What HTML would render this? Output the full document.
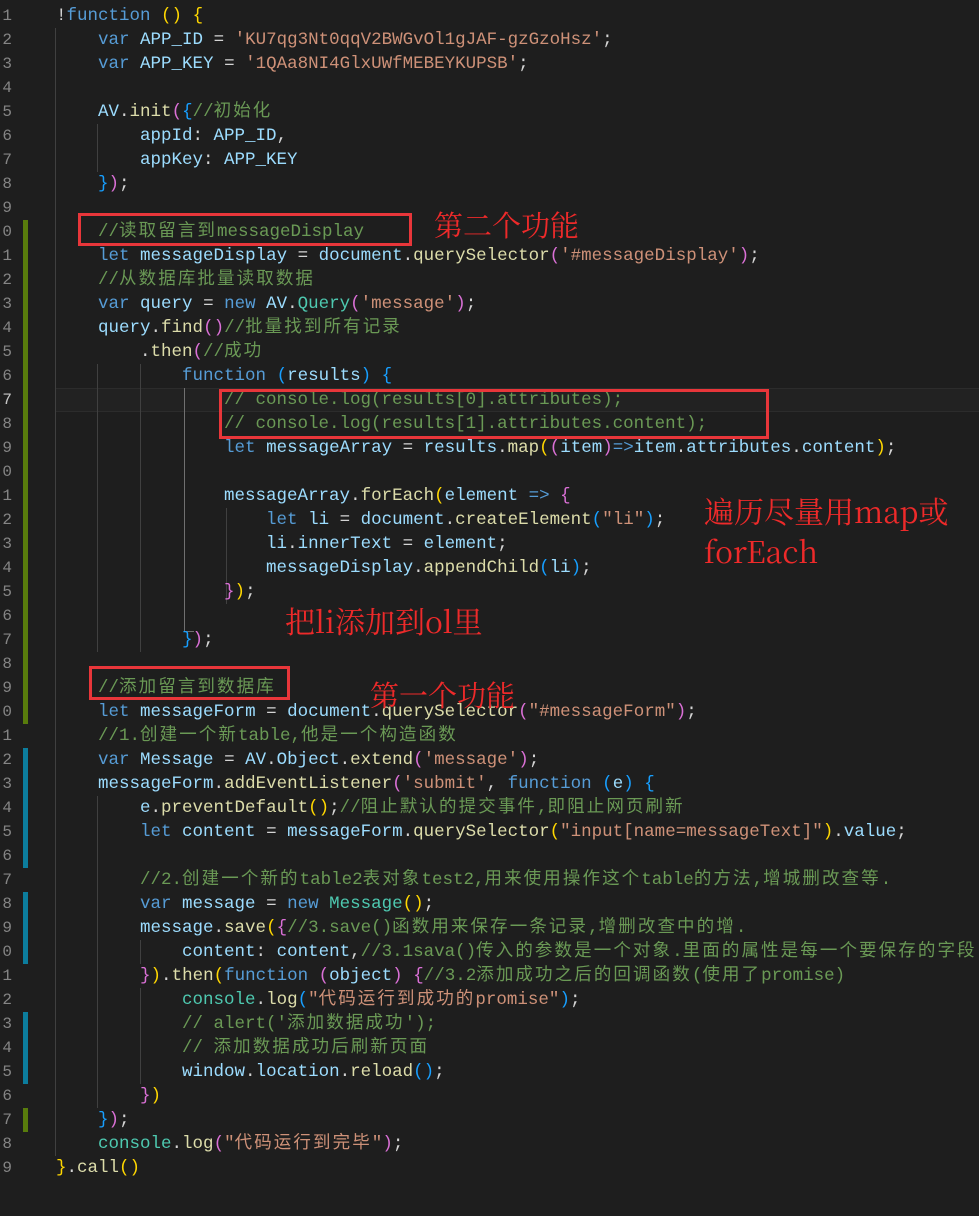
<!DOCTYPE html>
<html><head><meta charset="utf-8"><style>
html,body{margin:0;padding:0;background:#1e1e1e;width:979px;height:1216px;overflow:hidden;position:relative}
.l{position:absolute;left:56px;height:24px;line-height:24px;white-space:pre;font-family:"Liberation Mono","Noto Sans CJK SC",monospace;font-size:17.5px;color:#d4d4d4}
.n{position:absolute;left:-4px;width:16px;text-align:right;height:24px;line-height:24px;font-family:"Liberation Mono",monospace;font-size:16px;color:#858585}
.k{color:#569cd6}.v{color:#9cdcfe}.s{color:#ce9178}.c{color:#6a9955}.f{color:#dcdcaa}.t{color:#4ec9b0}
.b1{color:#ffd700}.b2{color:#da70d6}.b3{color:#179fff}
.z{letter-spacing:2.1px}
.g{position:absolute;width:1px;background:#404040}
.bar{position:absolute;left:23px;width:5px}
.red{position:absolute;border:3px solid #e8363a;box-sizing:border-box}
.ann{position:absolute;color:#ee2a2a;font-family:"Noto Serif CJK SC","Liberation Serif",serif;white-space:nowrap}
</style></head><body>
<div style="position:absolute;left:56px;right:0;top:388px;height:24px;border-top:1px solid #2c2c2c;border-bottom:1px solid #2c2c2c;box-sizing:border-box;background:#222"></div>
<div class="bar" style="top:220px;height:504px;background:#587c0c"></div>
<div class="bar" style="top:1108px;height:24px;background:#587c0c"></div>
<div class="bar" style="top:748px;height:120px;background:#0c7d9d"></div>
<div class="bar" style="top:892px;height:72px;background:#0c7d9d"></div>
<div class="bar" style="top:1012px;height:72px;background:#0c7d9d"></div>
<div class="g" style="left:55px;top:28px;height:1128px"></div>
<div class="g" style="left:97px;top:124px;height:48px"></div>
<div class="g" style="left:97px;top:364px;height:288px"></div>
<div class="g" style="left:97px;top:796px;height:312px"></div>
<div class="g" style="left:140px;top:364px;height:288px"></div>
<div class="g" style="left:140px;top:940px;height:24px"></div>
<div class="g" style="left:140px;top:988px;height:96px"></div>
<div class="g" style="left:184px;top:388px;height:244px;background:#707070"></div>
<div class="g" style="left:184px;top:631px;width:10px;height:1px;background:#707070"></div>
<div class="g" style="left:226px;top:508px;height:96px"></div>

<div class="n" style="top:4px">1</div><div class="l" style="top:4px">!<span class="k">function</span> <span class="b1">()</span> <span class="b1">{</span></div>
<div class="n" style="top:28px">2</div><div class="l" style="top:28px">    <span class="k">var</span> <span class="v">APP_ID</span> = <span class="s">'KU7qg3Nt0qqV2BWGvOl1gJAF-gzGzoHsz'</span>;</div>
<div class="n" style="top:52px">3</div><div class="l" style="top:52px">    <span class="k">var</span> <span class="v">APP_KEY</span> = <span class="s">'1QAa8NI4GlxUWfMEBEYKUPSB'</span>;</div>
<div class="n" style="top:76px">4</div>
<div class="n" style="top:100px">5</div><div class="l" style="top:100px">    <span class="v">AV</span>.<span class="f">init</span><span class="b2">(</span><span class="b3">{</span><span class="c">//<span class="z">初始化</span></span></div>
<div class="n" style="top:124px">6</div><div class="l" style="top:124px">        <span class="v">appId</span>: <span class="v">APP_ID</span>,</div>
<div class="n" style="top:148px">7</div><div class="l" style="top:148px">        <span class="v">appKey</span>: <span class="v">APP_KEY</span></div>
<div class="n" style="top:172px">8</div><div class="l" style="top:172px">    <span class="b3">}</span><span class="b2">)</span>;</div>
<div class="n" style="top:196px">9</div>
<div class="n" style="top:220px">0</div><div class="l" style="top:220px">    <span class="c">//<span class="z">读取留言到</span>messageDisplay</span></div>
<div class="n" style="top:244px">1</div><div class="l" style="top:244px">    <span class="k">let</span> <span class="v">messageDisplay</span> = <span class="v">document</span>.<span class="f">querySelector</span><span class="b2">(</span><span class="s">'#messageDisplay'</span><span class="b2">)</span>;</div>
<div class="n" style="top:268px">2</div><div class="l" style="top:268px">    <span class="c">//<span class="z">从数据库批量读取数据</span></span></div>
<div class="n" style="top:292px">3</div><div class="l" style="top:292px">    <span class="k">var</span> <span class="v">query</span> = <span class="k">new</span> <span class="v">AV</span>.<span class="t">Query</span><span class="b2">(</span><span class="s">'message'</span><span class="b2">)</span>;</div>
<div class="n" style="top:316px">4</div><div class="l" style="top:316px">    <span class="v">query</span>.<span class="f">find</span><span class="b2">()</span><span class="c">//<span class="z">批量找到所有记录</span></span></div>
<div class="n" style="top:340px">5</div><div class="l" style="top:340px">        .<span class="f">then</span><span class="b2">(</span><span class="c">//<span class="z">成功</span></span></div>
<div class="n" style="top:364px">6</div><div class="l" style="top:364px">            <span class="k">function</span> <span class="b3">(</span><span class="v">results</span><span class="b3">)</span> <span class="b3">{</span></div>
<div class="n" style="top:388px;color:#c6c6c6">7</div><div class="l" style="top:388px">                <span class="c">// console.log(results[0].attributes);</span></div>
<div class="n" style="top:412px">8</div><div class="l" style="top:412px">                <span class="c">// console.log(results[1].attributes.content);</span></div>
<div class="n" style="top:436px">9</div><div class="l" style="top:436px">                <span class="k">let</span> <span class="v">messageArray</span> = <span class="v">results</span>.<span class="f">map</span><span class="b1">(</span><span class="b2">(</span><span class="v">item</span><span class="b2">)</span><span class="k">=&gt;</span><span class="v">item</span>.<span class="v">attributes</span>.<span class="v">content</span><span class="b1">)</span>;</div>
<div class="n" style="top:460px">0</div>
<div class="n" style="top:484px">1</div><div class="l" style="top:484px">                <span class="v">messageArray</span>.<span class="f">forEach</span><span class="b1">(</span><span class="v">element</span> <span class="k">=&gt;</span> <span class="b2">{</span></div>
<div class="n" style="top:508px">2</div><div class="l" style="top:508px">                    <span class="k">let</span> <span class="v">li</span> = <span class="v">document</span>.<span class="f">createElement</span><span class="b3">(</span><span class="s">"li"</span><span class="b3">)</span>;</div>
<div class="n" style="top:532px">3</div><div class="l" style="top:532px">                    <span class="v">li</span>.<span class="v">innerText</span> = <span class="v">element</span>;</div>
<div class="n" style="top:556px">4</div><div class="l" style="top:556px">                    <span class="v">messageDisplay</span>.<span class="f">appendChild</span><span class="b3">(</span><span class="v">li</span><span class="b3">)</span>;</div>
<div class="n" style="top:580px">5</div><div class="l" style="top:580px">                <span class="b2">}</span><span class="b1">)</span>;</div>
<div class="n" style="top:604px">6</div>
<div class="n" style="top:628px">7</div><div class="l" style="top:628px">            <span class="b3">}</span><span class="b2">)</span>;</div>
<div class="n" style="top:652px">8</div>
<div class="n" style="top:676px">9</div><div class="l" style="top:676px">    <span class="c">//<span class="z">添加留言到数据库</span></span></div>
<div class="n" style="top:700px">0</div><div class="l" style="top:700px">    <span class="k">let</span> <span class="v">messageForm</span> = <span class="v">document</span>.<span class="f">querySelector</span><span class="b2">(</span><span class="s">"#messageForm"</span><span class="b2">)</span>;</div>
<div class="n" style="top:724px">1</div><div class="l" style="top:724px">    <span class="c">//1.<span class="z">创建一个新</span>table,<span class="z">他是一个构造函数</span></span></div>
<div class="n" style="top:748px">2</div><div class="l" style="top:748px">    <span class="k">var</span> <span class="v">Message</span> = <span class="v">AV</span>.<span class="v">Object</span>.<span class="f">extend</span><span class="b2">(</span><span class="s">'message'</span><span class="b2">)</span>;</div>
<div class="n" style="top:772px">3</div><div class="l" style="top:772px">    <span class="v">messageForm</span>.<span class="f">addEventListener</span><span class="b2">(</span><span class="s">'submit'</span>, <span class="k">function</span> <span class="b3">(</span><span class="v">e</span><span class="b3">)</span> <span class="b3">{</span></div>
<div class="n" style="top:796px">4</div><div class="l" style="top:796px">        <span class="v">e</span>.<span class="f">preventDefault</span><span class="b1">()</span>;<span class="c">//<span class="z">阻止默认的提交事件</span>,<span class="z">即阻止网页刷新</span></span></div>
<div class="n" style="top:820px">5</div><div class="l" style="top:820px">        <span class="k">let</span> <span class="v">content</span> = <span class="v">messageForm</span>.<span class="f">querySelector</span><span class="b1">(</span><span class="s">"input[name=messageText]"</span><span class="b1">)</span>.<span class="v">value</span>;</div>
<div class="n" style="top:844px">6</div>
<div class="n" style="top:868px">7</div><div class="l" style="top:868px">        <span class="c">//2.<span class="z">创建一个新的</span>table2<span class="z">表对象</span>test2,<span class="z">用来使用操作这个</span>table<span class="z">的方法</span>,<span class="z">增城删改查等</span>.</span></div>
<div class="n" style="top:892px">8</div><div class="l" style="top:892px">        <span class="k">var</span> <span class="v">message</span> = <span class="k">new</span> <span class="t">Message</span><span class="b1">()</span>;</div>
<div class="n" style="top:916px">9</div><div class="l" style="top:916px">        <span class="v">message</span>.<span class="f">save</span><span class="b1">(</span><span class="b2">{</span><span class="c">//3.save()<span class="z">函数用来保存一条记录</span>,<span class="z">增删改查中的增</span>.</span></div>
<div class="n" style="top:940px">0</div><div class="l" style="top:940px">            <span class="v">content</span>: <span class="v">content</span>,<span class="c">//3.1sava()<span class="z">传入的参数是一个对象</span>.<span class="z">里面的属性是每一个要保存的字段</span></span></div>
<div class="n" style="top:964px">1</div><div class="l" style="top:964px">        <span class="b2">}</span><span class="b1">)</span>.<span class="f">then</span><span class="b1">(</span><span class="k">function</span> <span class="b2">(</span><span class="v">object</span><span class="b2">)</span> <span class="b2">{</span><span class="c">//3.2<span class="z">添加成功之后的回调函数</span>(<span class="z">使用了</span>promise)</span></div>
<div class="n" style="top:988px">2</div><div class="l" style="top:988px">            <span class="t">console</span>.<span class="f">log</span><span class="b3">(</span><span class="s">"<span class="z">代码运行到成功的</span>promise"</span><span class="b3">)</span>;</div>
<div class="n" style="top:1012px">3</div><div class="l" style="top:1012px">            <span class="c">// alert('<span class="z">添加数据成功</span>');</span></div>
<div class="n" style="top:1036px">4</div><div class="l" style="top:1036px">            <span class="c">// <span class="z">添加数据成功后刷新页面</span></span></div>
<div class="n" style="top:1060px">5</div><div class="l" style="top:1060px">            <span class="v">window</span>.<span class="v">location</span>.<span class="f">reload</span><span class="b3">()</span>;</div>
<div class="n" style="top:1084px">6</div><div class="l" style="top:1084px">        <span class="b2">}</span><span class="b1">)</span></div>
<div class="n" style="top:1108px">7</div><div class="l" style="top:1108px">    <span class="b3">}</span><span class="b2">)</span>;</div>
<div class="n" style="top:1132px">8</div><div class="l" style="top:1132px">    <span class="t">console</span>.<span class="f">log</span><span class="b2">(</span><span class="s">"<span class="z">代码运行到完毕</span>"</span><span class="b2">)</span>;</div>
<div class="n" style="top:1156px">9</div><div class="l" style="top:1156px"><span class="b1">}</span>.<span class="f">call</span><span class="b1">()</span></div>

<div class="red" style="left:78px;top:213px;width:334px;height:33px"></div>
<div class="red" style="left:219px;top:389px;width:550px;height:50px"></div>
<div class="red" style="left:89px;top:666px;width:201px;height:34px"></div>
<div class="ann" style="left:434px;top:204px;font-size:29px">第二个功能</div>
<div class="ann" style="left:704px;top:488px;font-size:30px">遍历尽量用map或</div>
<div class="ann" style="left:704px;top:528px;font-size:30px">forEach</div>
<div class="ann" style="left:285px;top:598px;font-size:30px">把li添加到ol里</div>
<div class="ann" style="left:370px;top:674px;font-size:29px">第一个功能</div>
</body></html>
